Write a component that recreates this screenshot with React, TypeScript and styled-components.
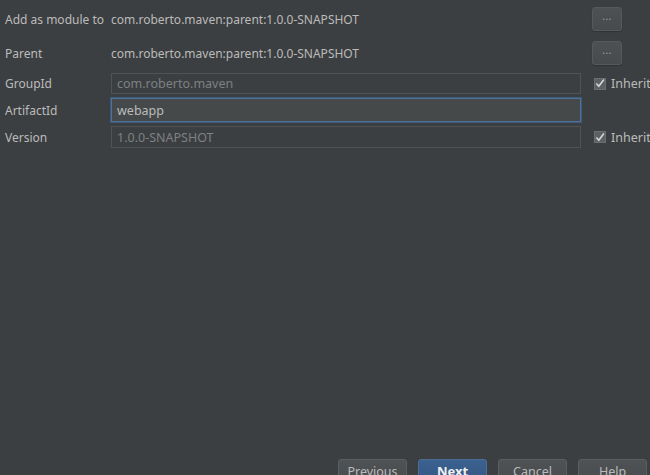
import React from 'react';
import styled, { createGlobalStyle } from 'styled-components';

const GlobalStyle = createGlobalStyle`
  html, body {
    margin: 0;
    padding: 0;
    height: 475px;
    overflow: hidden;
    background: #3c3f41;
  }
  #root {
    height: 475px;
  }
`;

const Dialog = styled.div`
  height: 475px;
  display: flex;
  flex-direction: column;
  font-family: "Noto Sans", "Open Sans", sans-serif;
  font-size: 12px;
  color: #bbbbbb;
  background: #3c3f41;
  box-sizing: border-box;
`;

const Form = styled.div`
  display: flex;
  flex-direction: column;
  padding: 7px 0 0 5px;
`;

const Row = styled.div<{ $h: number; $mt?: number }>`
  display: grid;
  grid-template-columns: 106px 470px 11px 1fr;
  align-items: center;
  height: ${p => p.$h}px;
  margin-top: ${p => p.$mt ?? 0}px;
`;

const Label = styled.div`
  white-space: nowrap;
`;

const Value = styled.div`
  white-space: nowrap;
`;

const Field = styled.div<{ $focused?: boolean; $disabled?: boolean }>`
  grid-column: 2;
  height: 100%;
  box-sizing: border-box;
  display: flex;
  align-items: center;
  padding-left: 5px;
  background: ${p => (p.$focused ? '#45494a' : '#3c3f41')};
  border: 1px solid ${p => (p.$focused ? '#4f7199' : '#505354')};
  box-shadow: ${p => (p.$focused ? '0 0 0 1px #3d5a7a' : 'none')};
  color: ${p => (p.$disabled ? '#7d8183' : '#bbbbbb')};
  font-size: 12.5px;
`;

const BrowseButton = styled.button`
  grid-column: 4;
  width: 30px;
  height: 24px;
  padding: 0 0 6px;
  border: 1px solid #56595b;
  border-radius: 3px;
  background: linear-gradient(#4d5153, #474b4d);
  color: #a0a4a6;
  font-family: inherit;
  font-size: 10px;
  letter-spacing: 0.5px;
  line-height: 1;
  box-shadow: 0 1px 1px rgba(0, 0, 0, 0.2);
`;

const CheckWrap = styled.label`
  grid-column: 4;
  display: flex;
  align-items: center;
  gap: 5px;
  padding-left: 2px;
  white-space: nowrap;
  font-size: 12.5px;
`;

const CheckBox = styled.span`
  width: 12px;
  height: 12px;
  box-sizing: border-box;
  background: #5c6062;
  border: 1px solid #6a6e70;
  display: flex;
  align-items: center;
  justify-content: center;
`;

const Footer = styled.div`
  margin-top: auto;
  margin-bottom: -12px;
  display: flex;
  justify-content: flex-end;
  gap: 11px;
  padding-right: 3px;
`;

const DialogButton = styled.button<{ $primary?: boolean }>`
  width: 69px;
  height: 28px;
  box-sizing: border-box;
  border-radius: 3px;
  font-family: inherit;
  font-size: ${p => (p.$primary ? 13 : 12.5)}px;
  padding: 0 0 4px;
  border: 1px solid ${p => (p.$primary ? '#4a6e96' : '#5b5f61')};
  background: ${p =>
    p.$primary ? 'linear-gradient(#3b6190, #335683)' : 'linear-gradient(#4e5254, #484c4e)'};
  color: ${p => (p.$primary ? '#f0f0f0' : '#bbbbbb')};
  font-weight: ${p => (p.$primary ? 700 : 400)};
`;

const Check = () => (
  <svg width="11" height="11" viewBox="0 0 11 11">
    <path d="M1.5 5.5 L4.2 8.6 L9.8 1.2" fill="none" stroke="#d6d6d6" strokeWidth="1.8" />
  </svg>
);

export default function App() {
  return (
    <>
      <GlobalStyle />
      <Dialog>
        <Form>
          <Row $h={24}>
            <Label>Add as module to</Label>
            <Value>com.roberto.maven:parent:1.0.0-SNAPSHOT</Value>
            <BrowseButton>...</BrowseButton>
          </Row>
          <Row $h={24} $mt={10}>
            <Label>Parent</Label>
            <Value>com.roberto.maven:parent:1.0.0-SNAPSHOT</Value>
            <BrowseButton>...</BrowseButton>
          </Row>
          <Row $h={21} $mt={8}>
            <Label>GroupId</Label>
            <Field $disabled>com.roberto.maven</Field>
            <CheckWrap>
              <CheckBox>
                <Check />
              </CheckBox>
              Inherit
            </CheckWrap>
          </Row>
          <Row $h={24} $mt={4}>
            <Label>ArtifactId</Label>
            <Field $focused>webapp</Field>
          </Row>
          <Row $h={22} $mt={4}>
            <Label>Version</Label>
            <Field $disabled>1.0.0-SNAPSHOT</Field>
            <CheckWrap>
              <CheckBox>
                <Check />
              </CheckBox>
              Inherit
            </CheckWrap>
          </Row>
        </Form>
        <Footer>
          <DialogButton>Previous</DialogButton>
          <DialogButton $primary>Next</DialogButton>
          <DialogButton>Cancel</DialogButton>
          <DialogButton>Help</DialogButton>
        </Footer>
      </Dialog>
    </>
  );
}
